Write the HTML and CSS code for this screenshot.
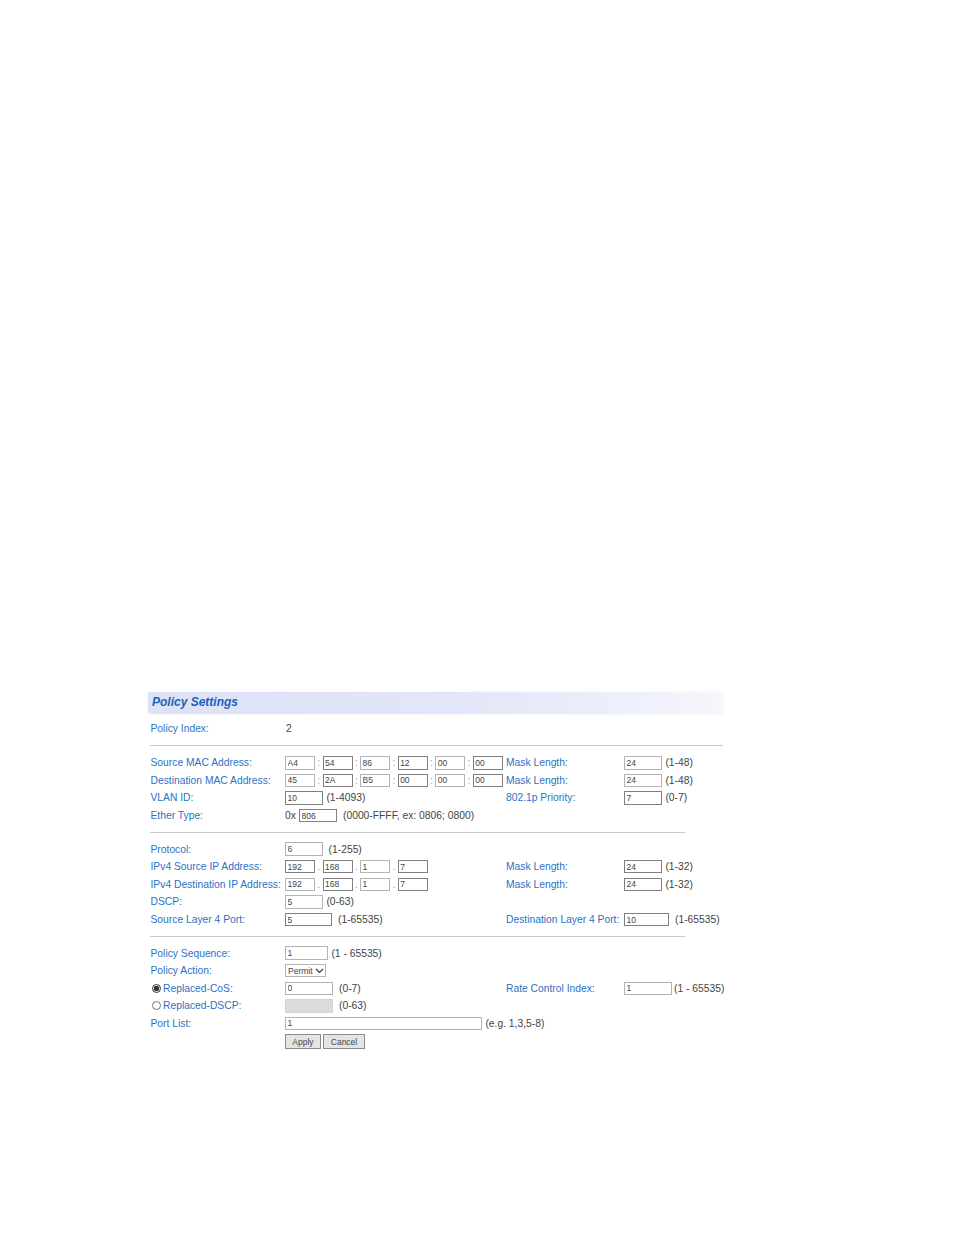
FILE: index.html
```html
<!DOCTYPE html>
<html lang="en">
<head>
  <meta charset="UTF-8">
  <meta name="viewport" content="width=device-width, initial-scale=1.0">
  <title>Policy Settings</title>
  <link rel="stylesheet" href="styles.css">
</head>
<body>
  <div class="policy-panel">
    <h1 class="panel-title">Policy Settings</h1>

    <div class="section section-first">
      <div class="row">
        <label>Policy Index:</label>
        <div class="field value">2</div>
      </div>
    </div>

    <div class="section section-mac">
      <div class="row">
        <label>Source MAC Address:</label>
        <div class="field">
          <input class="octet" type="text" value="A4"><span class="sep">:</span>
          <input class="octet dark" type="text" value="54"><span class="sep">:</span>
          <input class="octet" type="text" value="86"><span class="sep">:</span>
          <input class="octet dark" type="text" value="12"><span class="sep">:</span>
          <input class="octet" type="text" value="00"><span class="sep">:</span>
          <input class="octet dark" type="text" value="00">
        </div>
        <label>Mask Length:</label>
        <div class="field"><input class="w38" type="text" value="24"><span class="hint">(1-48)</span></div>
      </div>
      <div class="row">
        <label>Destination MAC Address:</label>
        <div class="field">
          <input class="octet" type="text" value="45"><span class="sep">:</span>
          <input class="octet dark" type="text" value="2A"><span class="sep">:</span>
          <input class="octet" type="text" value="B5"><span class="sep">:</span>
          <input class="octet dark" type="text" value="00"><span class="sep">:</span>
          <input class="octet" type="text" value="00"><span class="sep">:</span>
          <input class="octet dark" type="text" value="00">
        </div>
        <label>Mask Length:</label>
        <div class="field"><input class="w38" type="text" value="24"><span class="hint">(1-48)</span></div>
      </div>
      <div class="row">
        <label>VLAN ID:</label>
        <div class="field"><input class="w38 dark" type="text" value="10"><span class="hint">(1-4093)</span></div>
        <label>802.1p Priority:</label>
        <div class="field"><input class="w38 dark" type="text" value="7"><span class="hint">(0-7)</span></div>
      </div>
      <div class="row">
        <label>Ether Type:</label>
        <div class="field">
          <span class="prefix">0x</span><input class="w38 dark" type="text" value="806"><span class="hint hint-wide">(0000-FFFF, ex: 0806; 0800)</span>
        </div>
      </div>
    </div>

    <div class="section section-short">
      <div class="row">
        <label>Protocol:</label>
        <div class="field"><input class="w38" type="text" value="6"><span class="hint hint-mid">(1-255)</span></div>
      </div>
      <div class="row">
        <label>IPv4 Source IP Address:</label>
        <div class="field">
          <input class="octet dark" type="text" value="192"><span class="sep">.</span>
          <input class="octet dark" type="text" value="168"><span class="sep">.</span>
          <input class="octet" type="text" value="1"><span class="sep">.</span>
          <input class="octet dark" type="text" value="7">
        </div>
        <label>Mask Length:</label>
        <div class="field"><input class="w38 dark" type="text" value="24"><span class="hint">(1-32)</span></div>
      </div>
      <div class="row">
        <label>IPv4 Destination IP Address:</label>
        <div class="field">
          <input class="octet" type="text" value="192"><span class="sep">.</span>
          <input class="octet dark" type="text" value="168"><span class="sep">.</span>
          <input class="octet" type="text" value="1"><span class="sep">.</span>
          <input class="octet dark" type="text" value="7">
        </div>
        <label>Mask Length:</label>
        <div class="field"><input class="w38 dark" type="text" value="24"><span class="hint">(1-32)</span></div>
      </div>
      <div class="row">
        <label>DSCP:</label>
        <div class="field"><input class="w38" type="text" value="5"><span class="hint">(0-63)</span></div>
      </div>
      <div class="row">
        <label>Source Layer 4 Port:</label>
        <div class="field"><input class="w47 dark" type="text" value="5"><span class="hint hint-wide">(1-65535)</span></div>
        <label>Destination Layer 4 Port:</label>
        <div class="field"><input class="w45 dark" type="text" value="10"><span class="hint hint-wide">(1-65535)</span></div>
      </div>
    </div>

    <div class="section section-short">
      <div class="row">
        <label>Policy Sequence:</label>
        <div class="field"><input class="w43" type="text" value="1"><span class="hint">(1 - 65535)</span></div>
      </div>
      <div class="row">
        <label>Policy Action:</label>
        <div class="field">
          <div class="select-wrap">
            <select class="action-select">
              <option>Permit</option>
            </select>
            <svg class="select-arrow" width="9" height="6" viewBox="0 0 9 6"><path d="M1 1l3.5 3.5L8 1" fill="none" stroke="#333" stroke-width="1.2"/></svg>
          </div>
        </div>
      </div>
      <div class="row">
        <label class="radio-label"><input type="radio" name="replace" checked>Replaced-CoS:</label>
        <div class="field"><input class="w48" type="text" value="0"><span class="hint hint-wide">(0-7)</span></div>
        <label>Rate Control Index:</label>
        <div class="field"><input class="w48" type="text" value="1"><span class="hint hint-tight">(1 - 65535)</span></div>
      </div>
      <div class="row">
        <label class="radio-label"><input type="radio" name="replace">Replaced-DSCP:</label>
        <div class="field"><input class="w48" type="text" disabled><span class="hint hint-wide">(0-63)</span></div>
      </div>
      <div class="row">
        <label>Port List:</label>
        <div class="field field-wide"><input class="w197" type="text" value="1"><span class="hint">(e.g. 1,3,5-8)</span></div>
      </div>
      <div class="row">
        <span></span>
        <div class="field">
          <button class="btn btn-apply">Apply</button>
          <button class="btn btn-cancel">Cancel</button>
        </div>
      </div>
    </div>
  </div>
</body>
</html>
```

FILE: styles.css
```css
body {
  font-family: "Liberation Sans", Arial, sans-serif;
  background-color: #ffffff;
  margin: 0;
  padding-top: 692px;
}

.policy-panel {
  width: 575px;
  margin-left: 148px;
  font-size: 10.3px;
  color: #444;
}

.panel-title {
  height: 22px;
  line-height: 21px;
  margin: 0 0 5.6px;
  padding-left: 4px;
  font-size: 12px;
  font-style: italic;
  font-weight: bold;
  color: #1c62b9;
  border-radius: 3px;
  background: linear-gradient(to right, #dde2f7 0%, #e2e6f8 55%, #eef0fb 85%, #f6f6fc 100%);
  box-shadow: 0 0 3px #eef0fb;
}

.section {
  margin-left: 2px;
  margin-top: 7.6px;
  padding-top: 7.4px;
  border-top: 1px solid #c9c9c9;
}

.section-first {
  margin-top: 0;
  margin-bottom: -0.6px;
  padding-top: 0.6px;
  border-top: none;
}

.section-mac {
  margin-top: 8px;
  padding-top: 7.8px;
}

.section-short {
  width: 535px;
}

.row {
  display: grid;
  grid-template-columns: 134.5px 221px 118px 100px;
  align-items: center;
  height: 17.6px;
  padding-left: 0.5px;
  white-space: nowrap;
}

.row label {
  color: #2b72c4;
}

.field {
  display: flex;
  align-items: center;
}

.field-wide {
  grid-column: 2 / 5;
}

.value {
  padding-left: 1px;
}

input[type="text"] {
  box-sizing: border-box;
  height: 13.5px;
  padding: 0 1.5px;
  border: 1px solid #b4b4b4;
  border-radius: 0;
  font-family: "Liberation Sans", Arial, sans-serif;
  font-size: 8.5px;
  color: #444;
  background: #fff;
}

input[type="text"]:disabled {
  background: #dcdcdc;
  border-color: #d4d4d4;
}

input.dark {
  border-color: #808080;
}

.octet {
  width: 30px;
}

.w38 { width: 38px; }
.w43 { width: 43px; }
.w45 { width: 45px; }
.w47 { width: 47px; }
.w48 { width: 48px; }
.w197 { width: 197px; }

.sep {
  width: 7.55px;
  text-align: center;
  color: #999;
}

.prefix {
  width: 14px;
}

.hint {
  margin-left: 3.4px;
}

.hint-tight {
  margin-left: 2px;
}

.hint-mid {
  margin-left: 5.6px;
}

.hint-wide {
  margin-left: 6px;
}

.radio-label {
  display: flex;
  align-items: center;
}

.radio-label input {
  width: 9px;
  height: 9px;
  margin: 0 2px 0 1.5px;
  accent-color: #333;
}

.select-wrap {
  position: relative;
  display: flex;
}

.action-select {
  appearance: none;
  width: 41px;
  height: 13px;
  padding: 0 0 0 2px;
  border: 1px solid #b4b4b4;
  border-radius: 0;
  font-family: "Liberation Sans", Arial, sans-serif;
  font-size: 8.5px;
  color: #444;
  background: #fff;
}

.select-arrow {
  position: absolute;
  right: 2px;
  top: 4px;
}

.btn {
  box-sizing: border-box;
  height: 15px;
  margin-top: 1px;
  margin-right: 2px;
  padding: 0;
  border: 1px solid #8a8a8a;
  border-radius: 0;
  font-family: "Liberation Sans", Arial, sans-serif;
  font-size: 8.5px;
  color: #444;
  background-color: #e4e4e4;
}

.btn-apply {
  width: 36px;
}

.btn-cancel {
  width: 42px;
}
```
